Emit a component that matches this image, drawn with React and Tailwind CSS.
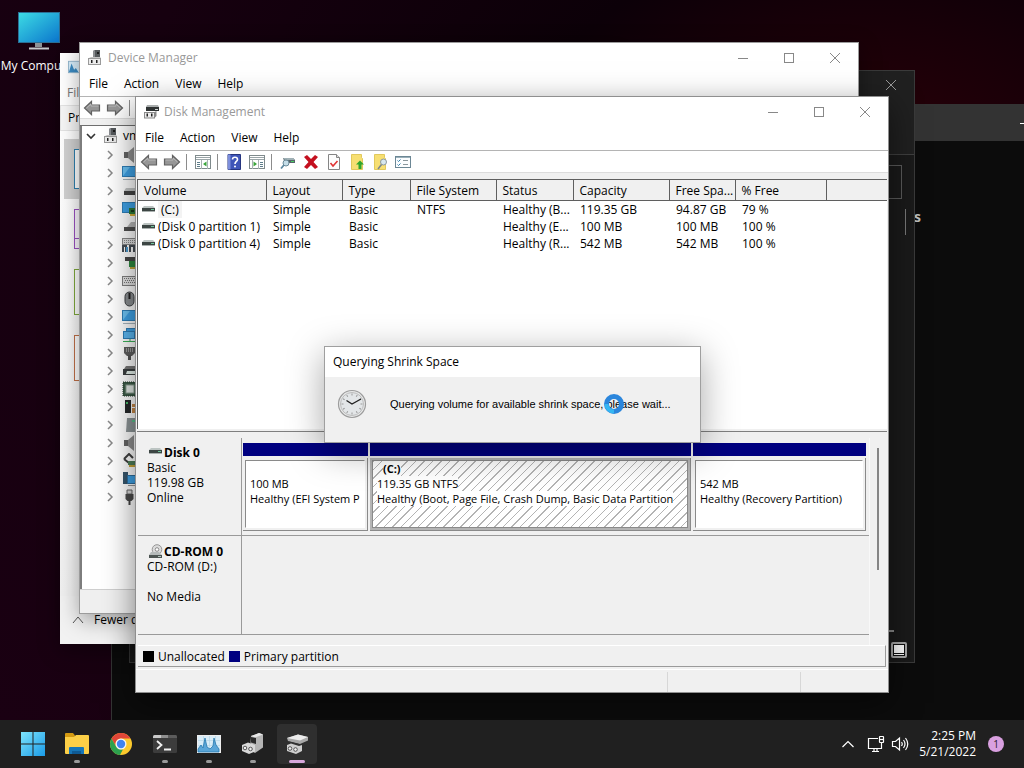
import React from "react";

const cx = (...names) => names.filter(Boolean).join(" ");

/* ---------- icons ---------- */

function Minus({ className }) {
  return (
    <svg viewBox="0 0 12 12" className={cx("size-3", className)} fill="none" stroke="currentColor">
      <path d="M1 6.500h10" />
    </svg>
  );
}
function Square({ className }) {
  return (
    <svg viewBox="0 0 12 12" className={cx("size-3", className)} fill="none" stroke="currentColor">
      <rect x="1.500" y="1.500" width="9" height="9" />
    </svg>
  );
}
function Cross({ className }) {
  return (
    <svg viewBox="0 0 12 12" className={cx("size-3", className)} fill="none" stroke="currentColor">
      <path d="M1 1l10 10M11 1L1 11" />
    </svg>
  );
}

function DeviceIcon({ className }) {
  return (
    <svg viewBox="0 0 16 16" className={cx("size-4 shrink-0", className)}>
      <path d="M6 1l2-1h5v9H6z" fill="#55595c" />
      <path d="M10 2h2v2h-2z" fill="#1c1c1c" />
      <path d="M6 1l2-1v9H6z" fill="#8a8d90" />
      <path d="M2 8l2-1h10l-1 1z" fill="#c4c4c4" />
      <rect x="1.500" y="8.500" width="12" height="6" fill="#ececec" stroke="#9a9a9a" />
      <path d="M4 10h1.500v3H4zM9 10h1.500v3H9z" fill="#222" />
    </svg>
  );
}
function DiskToolIcon({ className }) {
  return (
    <svg viewBox="0 0 16 16" className={cx("size-4", className)}>
      <path d="M4 1h11l1 2H3z" fill="#a9adad" />
      <path d="M3 3h13v4H3z" fill="#2f3333" />
      <path d="M12 5h3v1h-3z" fill="#cfd4d4" />
      <rect x="1.500" y="8.500" width="10" height="5.500" fill="#ececec" stroke="#8a8a8a" />
      <path d="M3.500 9.500H5v3H3.500zM8 9.500h1.500v3H8z" fill="#222" />
      <path d="M11.500 8l2-1v5l-2 2z" fill="#888" />
    </svg>
  );
}
function ArrowIcon({ flip }) {
  return (
    <svg viewBox="0 0 18 16" className={cx("h-4 w-[18px]", flip && "-scale-x-100")}>
      <path d="M1.500 8L8.500 1.500V5H16.500v6H8.500v3.500z" fill="#969696" stroke="#626262" strokeWidth="1.200" />
      <path d="M3.500 8L8 4v2h7.500" fill="none" stroke="#c4c4c4" strokeWidth="0.800" />
    </svg>
  );
}
function PaneIcon({ flip }) {
  return (
    <svg viewBox="0 0 16 16" className={cx("size-4", flip && "-scale-x-100")}>
      <rect x="0.500" y="1.500" width="15" height="13" fill="#fff" stroke="#7f8a8c" />
      <path d="M1 3.500h14M1 5.500h14" stroke="#9aa5a8" />
      <path d="M6.500 6v9M12.500 6v9" stroke="#aab2b5" />
      <path d="M2 8.500h3M2 10.500h3M2 12.500h3" stroke="#5d7d8a" />
      <path d="M11.500 7.500v5L8 10z" fill="#3aa53a" />
    </svg>
  );
}
function HelpIcon() {
  return (
    <svg viewBox="0 0 16 16" className="size-4">
      <path d="M2 .5h12.500v15H2z" fill="#3f55b8" stroke="#26357f" />
      <path d="M2 .5h2.500v15H2z" fill="#7d8fdd" />
      <path d="M6.500 5.500C6.500 2.500 11.500 2.500 11.500 5.500c0 2-2.500 2-2.500 4.500" fill="none" stroke="#fff" strokeWidth="1.600" />
      <circle cx="9" cy="12.500" r="1" fill="#fff" />
    </svg>
  );
}
function PlugIcon() {
  return (
    <svg viewBox="0 0 16 16" className="size-4">
      <path d="M3 4h10l2 2v3H5z" fill="#56646a" />
      <path d="M3 4h10l2 2H5z" fill="#9fb0b5" />
      <path d="M11 7h3v1h-3z" fill="#48d060" />
      <circle cx="6" cy="9" r="3" fill="#c4dde8" stroke="#6b8a99" />
      <path d="M4 11l-3 3.500" stroke="#5a87a0" strokeWidth="1.800" />
    </svg>
  );
}
function DeleteIcon() {
  return (
    <svg viewBox="0 0 16 16" className="size-4">
      <path d="M1 3l3-2 4 4 4-4 3 2-4.500 5L15 13l-3 2-4-4-4 4-3-2 4.500-5z" fill="#c4101f" />
    </svg>
  );
}
function CheckDocIcon() {
  return (
    <svg viewBox="0 0 16 16" className="size-4">
      <path d="M2.500.5h8l3 3v12h-11z" fill="#fdfdfd" stroke="#858585" />
      <path d="M10.500.5v3h3" fill="#ddd" stroke="#858585" />
      <path d="M4.500 9l2.500 3 4.500-5" fill="none" stroke="#e03434" strokeWidth="1.600" />
    </svg>
  );
}
function FolderUpIcon({ search }) {
  return (
    <svg viewBox="0 0 16 16" className="size-4">
      <path d="M2.500.5h10v3l1 1v11h-11z" fill="#f7df72" stroke="#e1c95c" />
      {search ? (
        <>
          <circle cx="11.500" cy="8" r="3" fill="#d7e7ee" stroke="#8b989e" />
          <path d="M9.500 10.500L6 15" stroke="#7d878c" strokeWidth="1.600" />
        </>
      ) : (
        <path d="M11 6.500l4 4h-2.500v4.500h-3v-4.500H7z" fill="#2fa62c" />
      )}
    </svg>
  );
}
function ChecklistIcon() {
  return (
    <svg viewBox="0 0 16 16" className="size-4">
      <rect x="0.500" y="2.500" width="15" height="11" fill="#fbfdff" stroke="#6c8795" />
      <path d="M1 3.500h14" stroke="#9ab0ba" />
      <path d="M2.500 6.500l1 1 2-2M2.500 10.500l1 1 2-2" fill="none" stroke="#2e7ea9" />
      <path d="M8 6.500h5M8 10.500h5" stroke="#8a979d" />
    </svg>
  );
}
function DriveIcon({ className }) {
  return (
    <svg viewBox="0 0 13 8" className={cx("h-2 w-[13px]", className)}>
      <path d="M2 1h9l2 2H0z" fill="#bcc4c2" />
      <path d="M0 3h13v3H0z" fill="#3d4644" />
      <path d="M9 4h3v1H9z" fill="#6fc59a" />
      <path d="M0 6h13v1H0z" fill="#a9b0ae" />
    </svg>
  );
}
function CdIcon() {
  return (
    <svg viewBox="0 0 16 16" className="size-4 shrink-0">
      <circle cx="10" cy="5.500" r="4.800" fill="#dcdcdc" stroke="#969696" />
      <circle cx="10" cy="5.500" r="1.800" fill="#fff" stroke="#8a8a8a" />
      <path d="M4 8h8l3 3H2z" fill="#b5baba" />
      <path d="M2 11h13v3H2z" fill="#4d5553" />
      <path d="M11 12h3v1h-3z" fill="#b5c8c0" />
    </svg>
  );
}

const treeArt = {
  audio: (
    <>
      <path d="M2 5h4v6H2z" fill="#666" />
      <path d="M6 5l6-5v16l-6-5z" fill="#8f8f8f" />
    </>
  ),
  monitor: (
    <>
      <rect x="0.500" y="1.500" width="15" height="10" fill="#3fa3e8" stroke="#2f7fb8" />
      <path d="M1 11L8 2H1z" fill="#6cc3f5" />
      <path d="M1 14.500h14" stroke="#a7b6bf" />
    </>
  ),
  drive: (
    <>
      <path d="M4 5h12v3H2z" fill="#c3c6c6" />
      <path d="M2 8h14v4H2z" fill="#444" />
    </>
  ),
  display: (
    <>
      <rect x="0.500" y="1.500" width="15" height="10" fill="#3fa3e8" stroke="#2f7fb8" />
      <path d="M7 7h9v6H7z" fill="#2e7d3a" />
      <path d="M8 13h8v2H8z" fill="#d9b13a" />
      <path d="M9 9h3v2H9z" fill="#163d1c" />
    </>
  ),
  dvd: (
    <>
      <path d="M9 3h7v5H5z" fill="#b8b8b8" />
      <path d="M2 8h14v4H2z" fill="#505050" />
    </>
  ),
  hid: (
    <>
      <rect x="0.500" y="1.500" width="15" height="6" fill="#e0e0e0" stroke="#888" />
      <path d="M2 3.500h13M2 5.500h13" stroke="#888" strokeDasharray="1 1" />
      <path d="M1 15V9h3v6M8 15V9h4v6" fill="none" stroke="#474e55" strokeWidth="2" />
      <path d="M5 10v5" stroke="#4a9ad0" strokeWidth="2" />
    </>
  ),
  card: (
    <>
      <path d="M3 2h13v4H3z" fill="#484848" />
      <path d="M7 6h9v6H7z" fill="#2e8b3f" />
      <path d="M8 12h8v2H8z" fill="#c5a93a" />
    </>
  ),
  keyboard: (
    <>
      <rect x="0.500" y="3.500" width="16" height="9" fill="#e4e4e4" stroke="#808080" />
      <path d="M2 5.500h14M3 7.500h13M2 9.500h14" stroke="#777" strokeDasharray="1 1" />
    </>
  ),
  mouse: (
    <>
      <rect x="3" y="1" width="9" height="14" rx="4.500" fill="#8b8f92" stroke="#3c3f41" />
      <path d="M7.500 2v6" stroke="#222" strokeWidth="2" />
    </>
  ),
  network: (
    <>
      <rect x="4.500" y="1.500" width="12" height="8" fill="#3fa3e8" stroke="#2f7fb8" />
      <rect x="1.500" y="4.500" width="11" height="7" fill="#5cb8f2" stroke="#2f7fb8" />
      <path d="M1 14.500h15M8 12v3" stroke="#3cb25a" />
    </>
  ),
  port: (
    <>
      <path d="M2 2h11v6l-3 3H5L2 8z" fill="#5f5f5f" />
      <path d="M4 4h7M4 6h7" stroke="#ddd" strokeDasharray="1 1" />
      <path d="M7.500 10v5" stroke="#555" strokeWidth="3" />
    </>
  ),
  printer: (
    <>
      <path d="M4 3h12v3H2z" fill="#777" />
      <path d="M1 6h15v6H1z" fill="#3b3f40" />
      <path d="M5 8h11v3H4z" fill="#e8f4ee" />
    </>
  ),
  cpu: (
    <>
      <rect x="1" y="1" width="14" height="14" fill="#3d5c48" stroke="#24382b" strokeDasharray="1 1" />
      <rect x="4" y="4" width="8" height="8" fill="#e5ebe7" stroke="#8fa396" />
    </>
  ),
  security: (
    <>
      <path d="M3 1h6v13H3z" fill="#26292a" />
      <path d="M10 5h5v3h-5zM10 9h5v5h-5z" fill="#c98b4a" />
      <path d="M4 3h2v2H4z" fill="#49bb6a" />
    </>
  ),
  software: (
    <>
      <path d="M5 1h9l2 2v12H4z" fill="#8e9698" />
      <path d="M10 3h3v2h-3z" fill="#56c28a" />
    </>
  ),
  storage: (
    <>
      <path d="M2 6l5-5 4 4M2 6l5 4" fill="none" stroke="#3f3f3f" strokeWidth="2" />
      <path d="M6 8h10v4H6z" fill="#4f7f5a" />
      <path d="M7 12h9v2H7z" fill="#caa63a" />
    </>
  ),
  system: (
    <>
      <path d="M1 1h5v12H1z" fill="#36556b" />
      <rect x="5.500" y="4.500" width="11" height="8" fill="#3fa3e8" stroke="#2f6f9f" />
      <path d="M6 14.500h10" stroke="#999" />
    </>
  ),
  usb: (
    <>
      <path d="M5 1h5v4H5z" fill="#d9d9d9" stroke="#666" />
      <path d="M3.500 5h8v5l-2 2h-4l-2-2z" fill="#4a4a4a" />
      <path d="M7.500 11v5" stroke="#444" strokeWidth="2" />
    </>
  ),
};

const deviceKinds = [
  "audio",
  "monitor",
  "drive",
  "display",
  "dvd",
  "hid",
  "card",
  "keyboard",
  "mouse",
  "monitor",
  "network",
  "port",
  "printer",
  "cpu",
  "security",
  "software",
  "audio",
  "storage",
  "system",
  "usb",
];

/* ---------- shared window parts ---------- */

function TitleBar({ icon, title }) {
  return (
    <header className="flex h-[30px] items-center gap-[5px] pl-[7px] text-[#999]">
      {icon}
      <h2 className="flex-1 text-[12px]">{title}</h2>
      <div className="flex items-center gap-[34px] pr-[17px] text-[#888]">
        <button aria-label="Minimize"><Minus /></button>
        <button aria-label="Maximize"><Square /></button>
        <button aria-label="Close"><Cross /></button>
      </div>
    </header>
  );
}

function MenuBar() {
  return (
    <nav className="flex h-6 items-center gap-4 border-b border-[#b4b4b4] pb-px pl-[9px] text-[12px]">
      {["File", "Action", "View", "Help"].map((m) => (
        <button key={m}>{m}</button>
      ))}
    </nav>
  );
}

function Tool({ label, children }) {
  return (
    <button aria-label={label} className="flex w-[23px] shrink-0 items-center justify-center">
      {children}
    </button>
  );
}
const Divider = () => <span className="mr-1 ml-[3px] h-4 w-px shrink-0 bg-[#8c8c8c]" />;

/* ---------- windows ---------- */

function TaskManager() {
  return (
    <section className="absolute top-[53px] left-[60px] flex h-[591px] w-[560px] flex-col bg-[#f6f6f6] shadow-[0_6px_20px_rgba(0,0,0,0.4)]">
      <div className="flex h-7 items-center bg-white pl-2">
        <svg viewBox="0 0 16 16" className="size-3.5">
          <rect x="0.500" y="1.500" width="15" height="13" fill="#d8eefb" stroke="#8fb4cc" />
          <path d="M1 14l3-10 3 7 2-2 3 5" fill="#3c8cc4" />
        </svg>
      </div>
      <div className="flex h-6 items-center bg-white pl-[7px] text-[12px] text-[#777]">File</div>
      <div className="flex h-[26px] items-center border border-[#e4e4e4] pl-[7px] text-[12px]">Processes</div>
      <div className="flex flex-1 flex-col bg-gradient-to-b from-white to-[#f0f0f0] pt-2 pl-1">
        <div className="h-[60px] bg-[#d0d0d0] pt-2.5 pl-2.5">
          <div className="h-10 w-20 border border-[#2f7fae] bg-white" />
        </div>
        <div className="pl-2.5">
          <div className="mt-2.5 h-10 w-20 border border-[#9a50c0] bg-[#faf6fc] pt-7">
            <div className="border-t border-[#9a50c0]" />
          </div>
          <div className="mt-5 h-[46px] w-20 border border-[#7ea83c] bg-white" />
          <div className="mt-5 h-[46px] w-20 border border-[#c07048] bg-white" />
        </div>
      </div>
      <footer className="flex h-12 items-center gap-2.5 bg-[#f2f2f2] pl-3 text-[12px]">
        <svg viewBox="0 0 12 12" className="size-3" fill="none" stroke="#555">
          <path d="M1 9l5-6 5 6" />
        </svg>
        Fewer details
      </footer>
    </section>
  );
}

function DeviceManager() {
  return (
    <section className="absolute top-[42px] left-[79px] flex h-[572px] w-[780px] flex-col border border-[#9b9b9b] bg-white shadow-[0_6px_20px_rgba(0,0,0,0.35)]">
      <TitleBar icon={<DeviceIcon />} title="Device Manager" />
      <MenuBar />
      <div className="flex h-[22px] items-center border-b border-[#dcdcdc]">
        <Tool label="Back"><ArrowIcon /></Tool>
        <Tool label="Forward"><ArrowIcon flip /></Tool>
        <Divider />
      </div>
      <div className="h-[7px] border-b border-[#6f6f6f] bg-[#f0f0f0]" />
      <ul className="flex-1 border-l-2 border-[#7d7d7d] text-[12px]">
        <li className="flex h-5 items-center pl-[3px]">
          <svg viewBox="0 0 12 12" className="size-3" fill="none" stroke="#333" strokeWidth="1.600">
            <path d="M2 4l4 4 4-4" />
          </svg>
          <DeviceIcon className="ml-1.5" />
          <span className="ml-1">vm</span>
        </li>
        {deviceKinds.map((kind, i) => (
          <li key={i} className="flex h-[18px] items-center pl-[22px]">
            <svg viewBox="0 0 12 12" className="size-3" fill="none" stroke="#888" strokeWidth="1.500">
              <path d="M4 2l4 4-4 4" />
            </svg>
            <svg viewBox="0 0 16 16" className="ml-1.5 size-4">{treeArt[kind]}</svg>
          </li>
        ))}
      </ul>
      <footer className="h-6 border-t border-[#cfcfcf] bg-[#f0f0f0]" />
    </section>
  );
}

const columns = [
  ["Volume", "w-[128px]"],
  ["Layout", "w-[76px]"],
  ["Type", "w-[68px]"],
  ["File System", "w-[86px]"],
  ["Status", "w-[77px]"],
  ["Capacity", "w-[96px]"],
  ["Free Spa...", "w-[66px]"],
  ["% Free", "w-[91px]"],
  ["", ""],
];
const volumes = [
  ["(C:)", "Simple", "Basic", "NTFS", "Healthy (B...", "119.35 GB", "94.87 GB", "79 %"],
  ["(Disk 0 partition 1)", "Simple", "Basic", "", "Healthy (E...", "100 MB", "100 MB", "100 %"],
  ["(Disk 0 partition 4)", "Simple", "Basic", "", "Healthy (R...", "542 MB", "542 MB", "100 %"],
];

function VolumeTable() {
  return (
    <table className="w-full table-fixed border-collapse text-left text-[12px] leading-[17px]">
      <thead>
        <tr className="h-5">
          {columns.map(([name, width]) => (
            <th
              key={name}
              className={cx(
                width,
                "border-r border-b border-[#5f5f5f] bg-[#f0f0f0] p-0 pt-0.5 pl-1.5 font-normal whitespace-nowrap last:border-r-0",
              )}
            >
              {name}
            </th>
          ))}
        </tr>
      </thead>
      <tbody>
        {volumes.map((row, r) => (
          <tr key={row[0]} className="h-[17px]">
            {row.map((cell, c) => (
              <td key={c} className="p-0 pl-[7px] whitespace-nowrap">
                {c === 0 ? (
                  <span className="-ml-[3px] flex items-center gap-[3px]">
                    <DriveIcon />
                    <span className={r === 0 ? "bg-[#f3f3f3] px-[3px]" : ""}>{cell}</span>
                  </span>
                ) : (
                  cell
                )}
              </td>
            ))}
            <td />
          </tr>
        ))}
      </tbody>
    </table>
  );
}

function Partition({ className, title, size, text, selected }) {
  return (
    <div className={cx("flex min-w-0 flex-col", className)}>
      <div className="h-[13px] bg-[#000080]" />
      <div className={cx("mt-0.5 flex h-[73px] border-r border-b border-[#8a8a8a] p-0.5", selected ? "bg-[#b4b4b4]" : "bg-[#f0f0f0]")}>
        <div
          className={cx(
            "flex min-w-0 flex-1 flex-col overflow-hidden border border-[#8a8a8a] pl-1 text-[11px] leading-[15px] whitespace-nowrap",
            selected
              ? "bg-white bg-[repeating-linear-gradient(135deg,#b4b4b4_0px,#b4b4b4_1px,#ffffff_1px,#ffffff_6px)]"
              : "border-r-white border-b-white bg-white",
          )}
        >
          <p className="h-[15px] pl-1.5 font-bold">
            {title && <span className={cx(selected && "bg-white")}>{title}</span>}
          </p>
          <p><span className="bg-white">{size}</span></p>
          <p><span className="bg-white">{text}</span></p>
        </div>
      </div>
    </div>
  );
}

function DiskManagement() {
  return (
    <section className="absolute top-24 left-[135px] flex h-[597px] w-[754px] flex-col border border-[#8f8f8f] bg-[#f0f0f0] shadow-[0_10px_30px_rgba(0,0,0,0.5)]">
      <div className="bg-white">
        <TitleBar icon={<DiskToolIcon />} title="Disk Management" />
        <MenuBar />
        <div className="flex h-[22px] items-center border-b border-[#dcdcdc] pl-px">
          <Tool label="Back"><ArrowIcon /></Tool>
          <Tool label="Forward"><ArrowIcon flip /></Tool>
          <Divider />
          <Tool label="Show console tree"><PaneIcon /></Tool>
          <Divider />
          <Tool label="Help"><HelpIcon /></Tool>
          <Tool label="Show action pane"><PaneIcon flip /></Tool>
          <Divider />
          <Tool label="Rescan"><PlugIcon /></Tool>
          <Tool label="Delete"><DeleteIcon /></Tool>
          <Tool label="Check"><CheckDocIcon /></Tool>
          <Tool label="Up one level"><FolderUpIcon /></Tool>
          <Tool label="Find"><FolderUpIcon search /></Tool>
          <Tool label="Properties"><ChecklistIcon /></Tool>
        </div>
      </div>
      <div className="mx-px mt-[6px] h-[250px] border-t border-l border-[#5f5f5f] bg-white">
        <VolumeTable />
      </div>
      <div className="mx-px h-[3px] border-b border-[#7f7f7f]" />
      <div className="ml-0.5 flex flex-1 pt-1.5">
        <div className="min-w-0 flex-1">
          <div className="flex h-[98px] border-b border-[#9a9a9a]">
            <div className="w-[104px] border-r border-[#9a9a9a] pt-[7px] pl-[9px] text-[12px] leading-[15px]">
              <h3 className="flex items-center gap-0.5 font-bold"><DriveIcon className="mb-1 ml-0.5" />Disk 0</h3>
              <p>Basic</p>
              <p>119.98 GB</p>
              <p>Online</p>
            </div>
            <div className="flex min-w-0 flex-1 gap-0.5 pt-[5px] pr-[3px] pl-px">
              <Partition className="flex-[125]" size="100 MB" text="Healthy (EFI System P" />
              <Partition className="flex-[321]" title="(C:)" size="119.35 GB NTFS" text="Healthy (Boot, Page File, Crash Dump, Basic Data Partition" selected />
              <Partition className="flex-[173]" size="542 MB" text="Healthy (Recovery Partition)" />
            </div>
          </div>
          <div className="flex h-[99px] border-b border-[#9a9a9a]">
            <div className="w-[104px] border-r border-[#9a9a9a] pt-2 pl-[9px] text-[12px] leading-[15px]">
              <h3 className="flex h-[15px] items-center gap-px font-bold whitespace-nowrap"><CdIcon />CD-ROM 0</h3>
              <p>CD-ROM (D:)</p>
              <p className="mt-[15px]">No Media</p>
            </div>
          </div>
        </div>
        <div className="flex w-[19px] justify-center border-l border-[#f8f8f8] pt-2.5 pr-0.5">
          <span className="h-[122px] w-0.5 bg-[#858585]" />
        </div>
      </div>
      <div className="mx-0.5 flex h-[22px] items-center gap-1 border-t border-r border-b border-t-white border-r-[#9a9a9a] border-b-[#9a9a9a] pt-px pl-[5px] text-[12px]">
        <span className="size-[11px] bg-black" />
        <span>Unallocated</span>
        <span className="size-[11px] bg-[#000080]" />
        <span>Primary partition</span>
      </div>
      <footer className="mt-0.5 flex h-[23px] justify-end border-t border-white pt-0.5">
        <span className="w-[133px] border-l border-[#d7d7d7]" />
        <span className="w-[88px] border-l border-[#d7d7d7]" />
      </footer>
    </section>
  );
}

function ShrinkDialog() {
  const ticks = Array.from({ length: 12 }, (_, i) => i * 30);
  return (
    <section
      role="dialog"
      aria-label="Querying Shrink Space"
      className="absolute top-[346px] left-[324px] flex h-[97px] w-[377px] flex-col border border-[#9f9f9f] bg-[#f0f0f0] shadow-[0_8px_36px_rgba(0,0,0,0.35)]"
    >
      <h2 className="flex h-[30px] items-center bg-white pl-2 text-[12px]">Querying Shrink Space</h2>
      <div className="flex items-center pt-3 pl-3">
        <svg viewBox="0 0 30 30" className="size-[30px]">
          <circle cx="15" cy="15" r="13.500" fill="#e9eaea" stroke="#9c9c9c" strokeWidth="1.200" />
          <circle cx="15" cy="15" r="11.500" fill="#e3e6e8" stroke="#bcbcbc" />
          {ticks.map((a) => (
            <path key={a} d="M15 4.500v2" stroke="#999" transform={`rotate(${a} 15 15)`} />
          ))}
          <path d="M9.500 11.500L15 15l9-5" fill="none" stroke="#222" strokeWidth="1.400" />
        </svg>
        <p className="ml-[23px] font-['Liberation_Sans',sans-serif] text-[11px] whitespace-nowrap">
          Querying volume for available shrink space, please wait...
        </p>
      </div>
    </section>
  );
}

function DarkWindows() {
  return (
    <>
      <section className="absolute top-26 left-[111px] h-[640px] w-[960px] border-l border-[#333] bg-[#0c0c0c]">
        <header className="flex h-[37px] items-center justify-end bg-[#333] pr-10 text-white"><Minus /></header>
        <p className="w-[809px] pt-[65px] text-right font-['Noto_Sans',sans-serif] text-[14px] font-bold text-[#bbb]">s</p>
      </section>
      <section className="absolute top-[70px] left-[129px] flex h-[593px] w-[786px] flex-col border border-[#3a3a3a] bg-[#1a1a1a]">
        <header className="flex h-[84px] justify-end border-b border-[#3f3f3f] bg-[#202020] pt-2 pr-[17px] text-[#999]"><Cross /></header>
        <div className="mt-2.5 mr-3 h-[34px] border border-[#5a5a5a]" />
        <div className="mt-2.5 mr-2 h-[26px] border-r border-[#777]" />
        <div className="mt-auto mr-5 mb-2.5 border-t-2 border-[#8a8a8a]" />
        <footer className="mb-1 flex justify-end pr-[7px]">
          <svg viewBox="0 0 16 16" className="size-4">
            <rect width="16" height="16" rx="2" fill="#aaa" />
            <rect x="2.500" y="2.500" width="11" height="11" fill="#fff" stroke="#111" />
            <path d="M3 11.500h10" stroke="#111" />
          </svg>
        </footer>
      </section>
    </>
  );
}

/* ---------- taskbar ---------- */

const art = {
  start: (
    <>
      <path d="M0 0h11.500v11.500H0zM12.500 0H24v11.500H12.500zM0 12.500h11.500V24H0zM12.500 12.500H24V24H12.500z" fill="url(#start)" />
      <defs>
        <linearGradient id="start" x2="1" y2="1">
          <stop stopColor="#7de3fb" />
          <stop offset="1" stopColor="#1a9be8" />
        </linearGradient>
      </defs>
    </>
  ),
  folder: (
    <>
      <path d="M0 2q0-1 1-1h7l2 2.500V7H0z" fill="#d49a12" />
      <path d="M0 5h9l2-2h12q1 0 1 1v17q0 1-1 1H1q-1 0-1-1z" fill="#fccf47" />
      <path d="M4 22v-6q0-1 1-1h13q1 0 1 1v6z" fill="#1676b8" />
      <path d="M7 19h9v3H7z" fill="#0f5a94" />
    </>
  ),
  chrome: (
    <>
      <circle cx="12" cy="12" r="11" fill="#fbc92c" />
      <path d="M2.500 6.500A11 11 0 0 1 21.500 6.500H12A5.500 5.500 0 0 0 7.200 14.700z" fill="#e04638" />
      <path d="M2.500 6.500L7.200 14.700A5.500 5.500 0 0 0 12 17.500L14 17.200 11 23A11 11 0 0 1 2.500 6.500z" fill="#2ca14e" />
      <circle cx="12" cy="12" r="5.500" fill="#f5f5f5" />
      <circle cx="12" cy="12" r="4.200" fill="#3f83ef" />
    </>
  ),
  terminal: (
    <>
      <rect y="3" width="24" height="18" rx="1.500" fill="#3c3c3c" />
      <path d="M0 6V4.500Q0 3 1.500 3H8v3z" fill="#c9c9c9" />
      <path d="M8 3h7v3H8z" fill="#8f8f8f" />
      <path d="M15 3h7.500Q24 3 24 4.500V6h-9z" fill="#5c5c5c" />
      <path d="M4 9l4.500 4L4 17M11 17.500h7" fill="none" stroke="#f2f2f2" strokeWidth="1.800" />
    </>
  ),
  monitor: (
    <>
      <rect x="0.500" y="3.500" width="23" height="17" fill="#d9edf8" stroke="#eee" />
      <path d="M1 8.500h22M1 13.500h22M6.500 4v16M12.500 4v16M18.500 4v16" stroke="#b5d5e7" strokeWidth="0.700" />
      <path d="M1 20v-3l3-4 2 3 2-10 2 9 3 2 3-3 1-8 2 7 3 4v3z" fill="#5aa6d8" stroke="#2678ae" strokeWidth="0.800" />
    </>
  ),
  device: (
    <>
      <path d="M10 4l8-3 4 1.500v13L14 21l-5-3z" fill="#b5b5b5" />
      <path d="M10 4l8-3 4 1.500-8 3z" fill="#e8e8e8" />
      <path d="M10 5l5 1v6l-5-1.500z" fill="#2b2b2b" />
      <path d="M1 13l6-2.500 7 2.500v6.500L8 22l-7-3z" fill="#d8d8d8" />
      <circle cx="4" cy="16" r="1.800" fill="#eee" stroke="#555" />
      <circle cx="9.500" cy="17" r="1.800" fill="#eee" stroke="#555" />
    </>
  ),
  disk: (
    <>
      <path d="M2 6l11-3.500 10 2.500v3.500L15 12 3 9z" fill="#a8a8a8" />
      <path d="M2 6l11-3.500 10 2.500-8 3.500z" fill="#ececec" />
      <path d="M4 9.500l10 2.500v1.500L4 11z" fill="#333" />
      <path d="M2 13l4-1.500 8 2.500 3-1v6l-6 3-9-3z" fill="#cfcfcf" />
      <circle cx="5" cy="16.500" r="1.800" fill="#eee" stroke="#555" />
      <circle cx="10.500" cy="17.500" r="1.800" fill="#eee" stroke="#555" />
    </>
  ),
};

const apps = [
  ["Start", "start"],
  ["File Explorer", "folder", "open"],
  ["Chrome", "chrome"],
  ["Terminal", "terminal", "open"],
  ["Task Manager", "monitor", "open"],
  ["Device Manager", "device", "open"],
  ["Disk Management", "disk", "active"],
];

function Taskbar() {
  return (
    <footer className="relative flex h-12 shrink-0 items-center justify-between bg-[#202020] pr-5 pl-[13px] text-white">
      <div className="flex gap-1">
        {apps.map(([name, icon, state]) => (
          <button
            key={name}
            aria-label={name}
            className={cx(
              "flex h-10 w-10 flex-col items-center justify-end rounded",
              state === "active" && "bg-[#2f2f2f]",
            )}
          >
            <svg viewBox="0 0 24 24" className="size-6">{art[icon]}</svg>
            <span
              className={cx(
                "mt-1 mb-px h-[3px] rounded-full",
                state === "active" ? "w-4 bg-[#d8a8dc]" : "w-1.5",
                state === "open" && "bg-[#9a9a9a]",
              )}
            />
          </button>
        ))}
      </div>
      <div className="flex items-center">
        <button aria-label="Show hidden icons">
          <svg viewBox="0 0 14 14" className="size-3.5" fill="none" stroke="#fff" strokeWidth="1.200"><path d="M1.500 10L7 4.500l5.500 5.500" /></svg>
        </button>
        <button aria-label="Network" className="ml-3">
          <svg viewBox="0 0 18 18" className="size-[18px]" fill="none" stroke="#fff" strokeWidth="1.200">
            <path d="M11 3.500H1.500v10H14.500V7.500M5 16.500h7M7 13.500v3M10 13.500v3" />
            <rect x="12.500" y="1.500" width="4" height="6" rx="0.500" />
            <path d="M12.500 4.500h4" />
          </svg>
        </button>
        <button aria-label="Volume" className="ml-1.5">
          <svg viewBox="0 0 18 18" className="size-[18px]" fill="none" stroke="#fff" strokeWidth="1.200">
            <path d="M1.500 6.500h3L8.500 3v12l-4-3.500h-3zM10.500 7q1.500 2 0 4M12.500 5q3 4 0 8M14.500 3q4.500 6 0 12" />
          </svg>
        </button>
        <div className="ml-2.5 text-right text-[12px] leading-4">
          <p>2:25 PM</p>
          <p>5/21/2022</p>
        </div>
        <span className="ml-3 flex size-4 items-center justify-center rounded-full bg-[#d9a0e0] text-[10px] text-[#2a1a2c]">1</span>
      </div>
    </footer>
  );
}

export default function App() {
  return (
    <div className="flex h-screen flex-col overflow-hidden bg-[#160010] font-['Open_Sans','Noto_Sans',sans-serif] text-black">
      <main className="relative flex-1 overflow-hidden bg-[radial-gradient(ellipse_at_85%_22%,#2a0008_0%,#0c0008_28%,#16000f_60%,#1a0012_100%)]">
        <a href="#computer" className="flex w-[78px] flex-col items-center pt-3 text-[12px] whitespace-nowrap text-white">
          <svg viewBox="0 0 42 38" className="h-[38px] w-[42px]">
            <defs>
              <linearGradient id="screen" x2="1" y2="1">
                <stop stopColor="#3ddce4" />
                <stop offset="1" stopColor="#0a74cc" />
              </linearGradient>
            </defs>
            <path d="M17 30h7v5h-7z" fill="#8d9296" />
            <path d="M11 35.500h20v2H11z" fill="#c6c9cb" />
            <rect x="0.500" y="0.500" width="41" height="30" fill="url(#screen)" stroke="#2b6f94" />
          </svg>
          <span className="mt-1 leading-6">My Computer</span>
        </a>
        <DarkWindows />
        <TaskManager />
        <DeviceManager />
        <DiskManagement />
        <ShrinkDialog />
        <svg viewBox="0 0 22 22" className="absolute top-[393px] left-[603px] size-[22px]" fill="none">
          <circle cx="11" cy="11" r="7.500" stroke="#2b86dc" strokeWidth="5" />
          <path d="M3.500 11A7.500 7.500 0 0 0 11 18.500" stroke="#35b6f2" strokeWidth="4" />
        </svg>
      </main>
      <Taskbar />
    </div>
  );
}
